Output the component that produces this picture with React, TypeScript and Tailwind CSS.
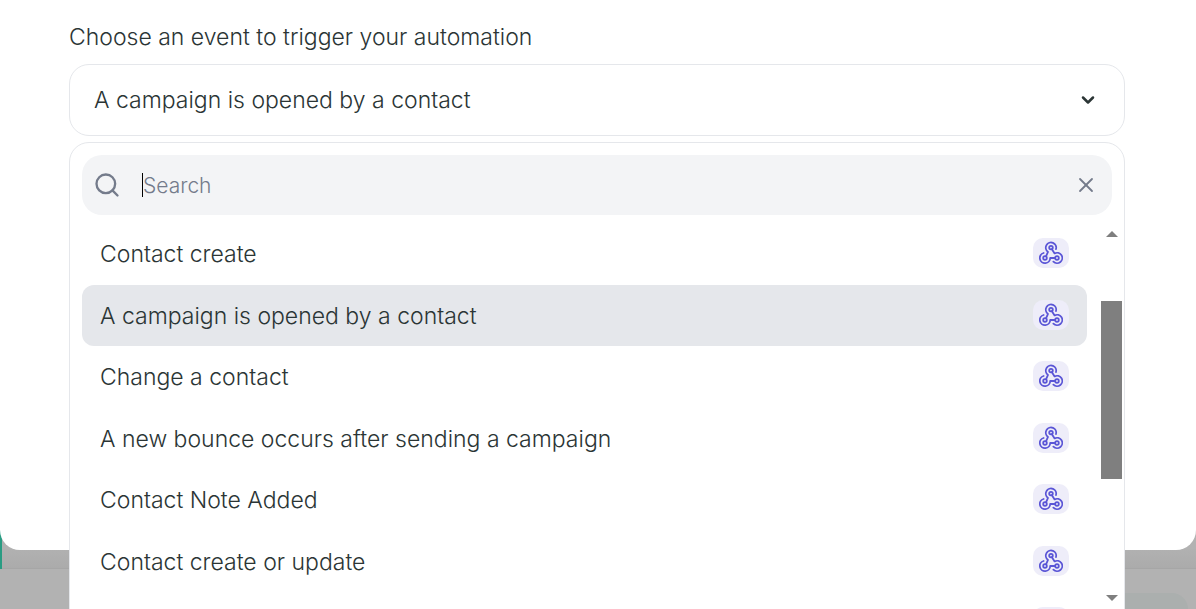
import { useState } from 'react';
import { ChevronDown, Search, X } from 'lucide-react';

const events = [
  'Contact create',
  'A campaign is opened by a contact',
  'Change a contact',
  'A new bounce occurs after sending a campaign',
  'Contact Note Added',
  'Contact create or update',
];

function WebhookBadge() {
  return (
    <span className="flex h-[30px] w-9 items-center justify-center rounded-[10px] bg-[#eeedf9] text-[#5a55d6]">
      <svg
        viewBox="0 0 24 24"
        className="h-6 w-6"
        fill="none"
        stroke="currentColor"
        strokeWidth="1.8"
        strokeLinecap="round"
        strokeLinejoin="round"
        aria-hidden="true"
      >
        <circle cx="12" cy="6.6" r="1.8" />
        <circle cx="6" cy="17" r="1.8" />
        <circle cx="18" cy="17" r="1.8" />
        <path d="M17 8.1A5.2 5.2 0 1 0 9 10.9L7 15.3" />
        <path d="M4.6 12A5.2 5.2 0 1 0 11.2 17H16.1" />
        <path d="M12.9 8.3L15.6 12.4A5.2 5.2 0 1 1 14.4 20.7" />
      </svg>
    </span>
  );
}

export default function App() {
  const [query, setQuery] = useState('');
  const [selected, setSelected] = useState(events[1]);

  return (
    <div className="relative flex h-screen flex-col overflow-hidden bg-[#b2b2b2] font-['Inter',sans-serif] font-light text-[#2b3535]">
      {/* Dimmed page behind the dialog */}
      <div className="absolute inset-0 flex flex-col">
        <div className="flex flex-1 flex-col justify-end border-l-2 border-[#2a9c83]">
          <div className="h-5 border-b border-[#a6a6a6] bg-gradient-to-b from-[#b1b1b1] to-[#ababab]"></div>
        </div>
        <div className="flex h-10 items-end justify-end pr-2">
          <div className="h-4 w-1/2 rounded-tr-2xl bg-[#abafae]"></div>
        </div>
      </div>

      <div className="relative mb-[59px] flex-1 rounded-b-[20px] bg-white pl-[69px] pr-[71px] pt-5">
        <label htmlFor="event" className="block text-[23px] leading-[34px]">
          Choose an event to trigger your automation
        </label>

        <div className="relative mt-[10px]">
          <button
            id="event"
            type="button"
            className="flex h-[72px] w-full items-center justify-between rounded-[20px] border border-[#e5e7eb] bg-white pl-6 pr-[26px] text-left text-[23px]"
          >
            {selected}
            <ChevronDown className="h-5 w-5" strokeWidth={3} />
          </button>

          {/* Dropdown */}
          <div className="absolute inset-x-0 top-full mt-[6px] rounded-[20px] border border-[#e5e7eb] bg-white pb-8 pt-3">
            <div className="mx-3 flex h-[60px] items-center rounded-[20px] bg-[#f3f4f6] pl-[11px] pr-[14px] text-[#747b8b]">
              <Search className="h-7 w-7 shrink-0" strokeWidth={2} />
              <span className="ml-[21px] h-6 w-px shrink-0 bg-black"></span>
              <input
                type="text"
                aria-label="Search"
                placeholder="Search"
                value={query}
                onChange={(e) => setQuery(e.target.value)}
                className="min-w-0 flex-1 bg-transparent pt-[2px] text-[21px] outline-none placeholder:text-[#747b8b]"
              />
              <button type="button" aria-label="Clear" onClick={() => setQuery('')}>
                <X className="h-6 w-6" strokeWidth={1.8} />
              </button>
            </div>

            <div className="mt-2 flex h-[386px] pl-3 pr-[2px]">
              <ul className="grid flex-1 auto-rows-[62px_61px] overflow-hidden">
                {events
                  .filter((event) => event.toLowerCase().includes(query.toLowerCase()))
                  .map((event) => (
                    <li key={event}>
                      <button
                        type="button"
                        onClick={() => setSelected(event)}
                        className={`flex h-full w-full items-center justify-between rounded-xl px-[18px] pb-[2px] text-left text-[23px] leading-6 ${
                          event === selected ? 'bg-[#e5e7eb]' : 'bg-white'
                        }`}
                      >
                        <span className="pt-[2px]">{event}</span>
                        <WebhookBadge />
                      </button>
                    </li>
                  ))}
                <li className="flex items-center justify-end px-[18px] pb-[2px]" aria-hidden="true">
                  <WebhookBadge />
                </li>
              </ul>

              {/* Scrollbar */}
              <div className="ml-[14px] flex w-[21px] flex-col items-center justify-between text-[#7f7f7f]" aria-hidden="true">
                <svg viewBox="0 0 12 6" className="mt-2 h-[6px] w-3" fill="currentColor">
                  <path d="M6 0l6 6H0z" />
                </svg>
                <div className="mt-16 mb-auto h-[178px] w-full bg-[#7f7f7f]"></div>
                <svg viewBox="0 0 12 6" className="mb-2 h-[6px] w-3" fill="currentColor">
                  <path d="M0 0h12L6 6z" />
                </svg>
              </div>
            </div>
          </div>
        </div>
      </div>
    </div>
  );
}
